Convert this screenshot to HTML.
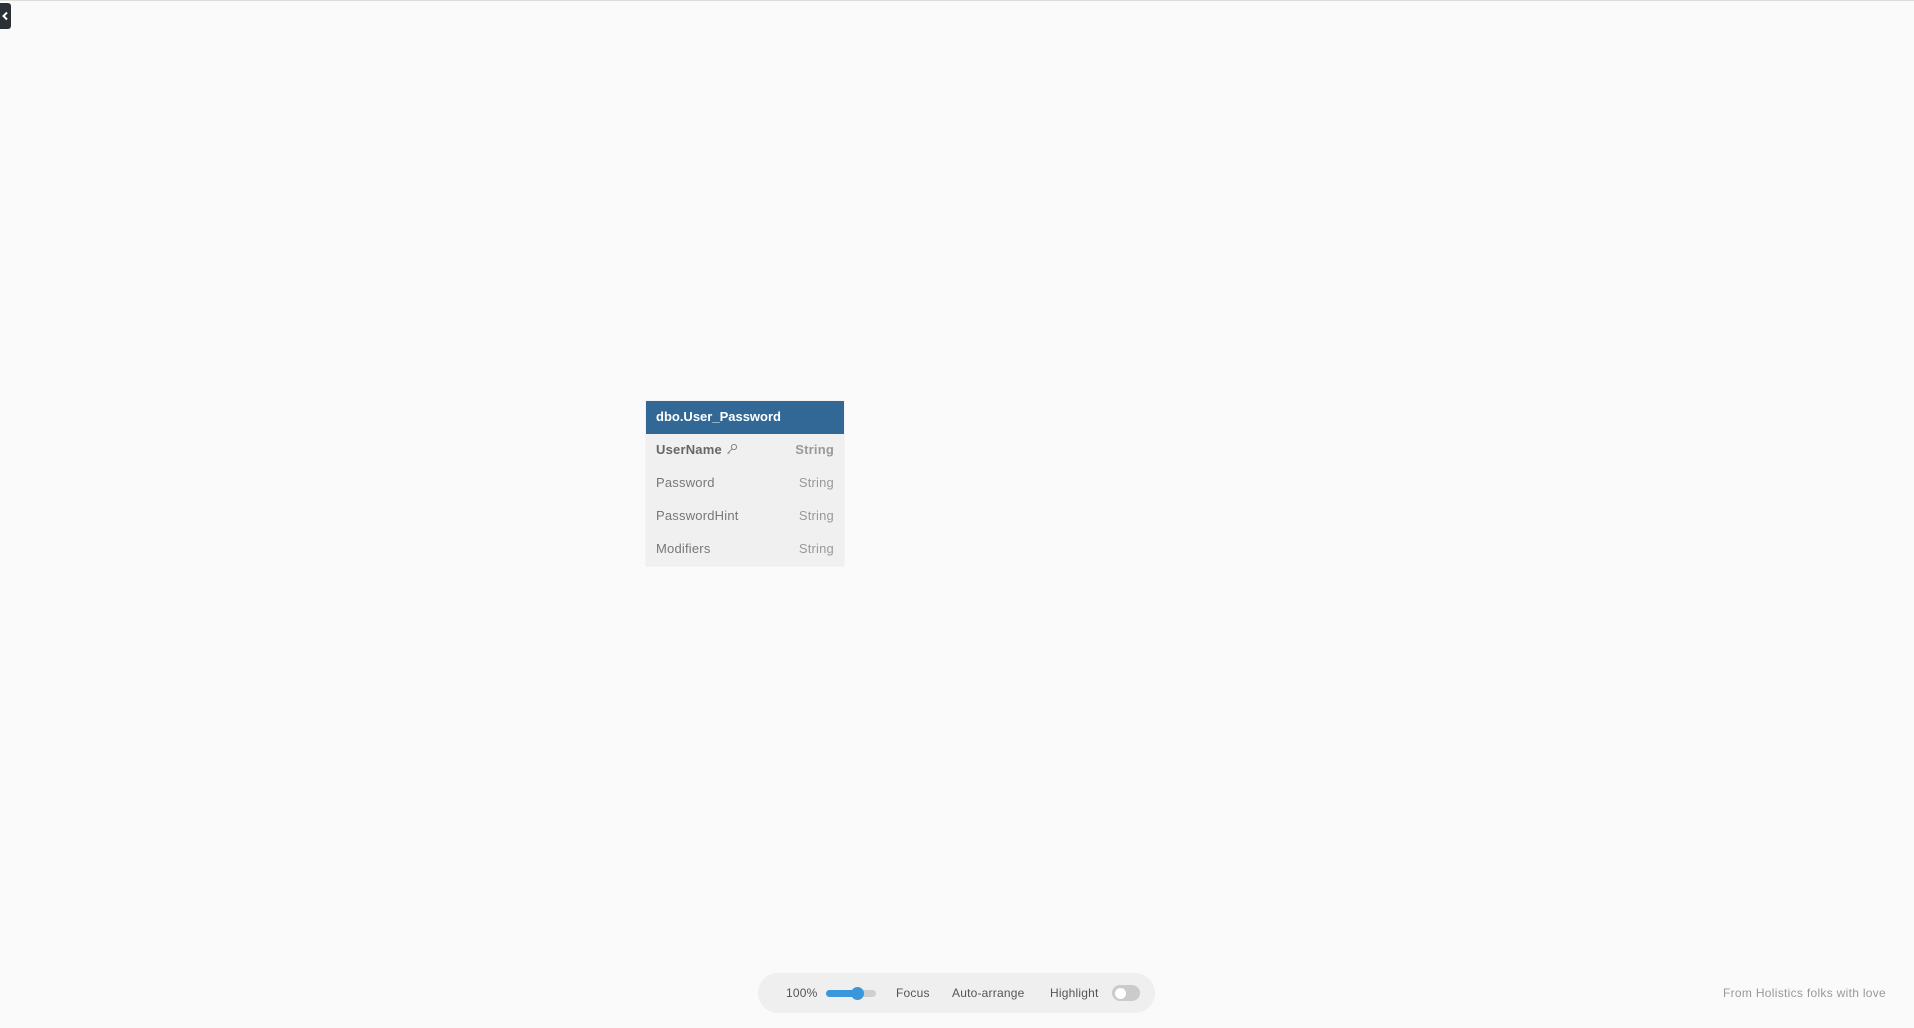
<!DOCTYPE html>
<html><head><meta charset="utf-8"><style>
html,body{margin:0;padding:0;width:1914px;height:1028px;overflow:hidden;background:#fafafa;font-family:"Liberation Sans",sans-serif;}
.topline{position:absolute;left:0;top:0;width:1914px;height:1px;background:#dcdcdc;}
.btn{position:absolute;left:0;top:3px;width:11px;height:26px;background:#2b2f36;border-radius:0 3px 3px 0;}
.card{position:absolute;left:646px;top:401px;width:198px;height:165px;background:#f0f0f0;box-shadow:0 0 1px rgba(0,0,0,.15);}
.hd{height:33px;background:#316896;color:#fff;font-weight:bold;font-size:13px;line-height:31px;padding-left:10px;}
.row{height:33px;line-height:31px;font-size:13px;color:#777;padding:0 10px;display:flex;justify-content:space-between;letter-spacing:0.2px;}
.row .t{color:#999;}
.row.b{font-weight:bold;color:#666;}
.row.b .t{color:#999;}
.tb{position:absolute;left:758px;top:973px;width:397px;height:40px;background:#efefef;border-radius:20px;font-size:12px;color:#555;}
.tb span{position:absolute;top:0;line-height:40px;letter-spacing:0.2px;}
.foot{position:absolute;left:1723px;top:985px;font-size:12px;color:#999;line-height:16px;letter-spacing:0.3px;}
</style></head><body>
<div class="topline"></div>
<div class="btn"><svg width="11" height="26" style="position:absolute;left:0;top:0"><path d="M7 9.5 L3.5 13 L7 16.5" stroke="#fff" stroke-width="2" fill="none"/></svg></div>
<div class="card">
<div class="hd">dbo.User_Password</div>
<div class="row b"><span>UserName <svg width="12" height="12" viewBox="0 0 12 12" style="vertical-align:-1px"><circle cx="8" cy="4" r="2.6" fill="none" stroke="#888" stroke-width="1"/><path d="M6.2 5.8 L1.5 10.5 M2.5 9.5 L3.5 10.5" stroke="#888" stroke-width="1" fill="none"/></svg></span><span class="t">String</span></div>
<div class="row"><span>Password</span><span class="t">String</span></div>
<div class="row"><span>PasswordHint</span><span class="t">String</span></div>
<div class="row"><span>Modifiers</span><span class="t">String</span></div>
</div>
<div class="tb">
<span style="left:28px">100%</span>
<div style="position:absolute;left:68px;top:17px;width:50px;height:7px;border-radius:4px;background:#cfcfcf"></div>
<div style="position:absolute;left:68px;top:17px;width:31px;height:7px;border-radius:4px;background:#3a97dc"></div>
<div style="position:absolute;left:93px;top:14px;width:13px;height:13px;border-radius:50%;background:#3a97dc"></div>
<span style="left:138px">Focus</span>
<span style="left:194px">Auto-arrange</span>
<span style="left:292px">Highlight</span>
<div style="position:absolute;left:354px;top:12px;width:28px;height:16px;border-radius:8px;background:#cbcbcb"></div>
<div style="position:absolute;left:357px;top:14.5px;width:11px;height:11px;border-radius:50%;background:#fff"></div>
</div>
<div class="foot">From Holistics folks with love</div>
</body></html>
